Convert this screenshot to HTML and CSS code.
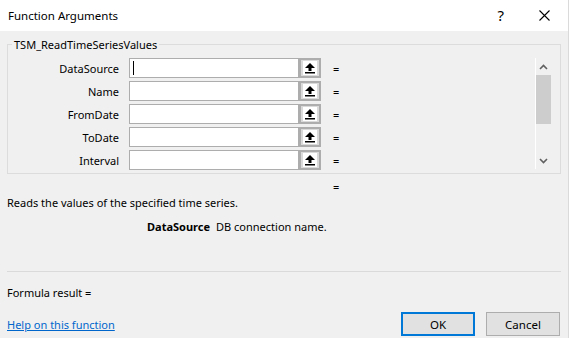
FILE: index.html
```html
<!DOCTYPE html>
<html lang="en">
<head>
    <meta charset="UTF-8" />
    <title>Function Arguments</title>
    <meta name="viewport" content="width=device-width, initial-scale=1.0" />
    <link rel="stylesheet" href="styles.css">
</head>

<body>
<div class="dialog">

    <!-- Title bar -->
    <div class="titlebar">
        <span class="title">Function Arguments</span>
        <span class="help-btn">?</span>
        <span class="close-btn">
            <svg width="11" height="11" viewBox="0 0 11 11"><path d="M0.5 0.5 L10.5 10.5 M10.5 0.5 L0.5 10.5" stroke="#000" stroke-width="1.1" fill="none"/></svg>
        </span>
    </div>

    <div class="body">

        <!-- Arguments group -->
        <fieldset class="group">
            <legend>TSM_ReadTimeSeriesValues</legend>
            <div class="group-inner">
                <div class="args">
                    <div class="arg-row">
                        <label>DataSource</label>
                        <div class="ref-box">
                            <span class="ref-text"><span class="caret"></span></span>
                            <span class="ref-btn"><svg width="18" height="16" viewBox="0 0 18 16"><rect x="2" y="1" width="14" height="14" fill="#fff"/><path d="M4 8 L9 3 L14 8 Z" fill="#000"/><rect x="7.5" y="7.5" width="3" height="3.5" fill="#000"/><rect x="4" y="12" width="10" height="1.5" fill="#000"/></svg></span>
                        </div>
                        <span class="eq">=</span>
                    </div>
                    <div class="arg-row">
                        <label>Name</label>
                        <div class="ref-box">
                            <span class="ref-text"></span>
                            <span class="ref-btn"><svg width="18" height="16" viewBox="0 0 18 16"><rect x="2" y="1" width="14" height="14" fill="#fff"/><path d="M4 8 L9 3 L14 8 Z" fill="#000"/><rect x="7.5" y="7.5" width="3" height="3.5" fill="#000"/><rect x="4" y="12" width="10" height="1.5" fill="#000"/></svg></span>
                        </div>
                        <span class="eq">=</span>
                    </div>
                    <div class="arg-row">
                        <label>FromDate</label>
                        <div class="ref-box">
                            <span class="ref-text"></span>
                            <span class="ref-btn"><svg width="18" height="16" viewBox="0 0 18 16"><rect x="2" y="1" width="14" height="14" fill="#fff"/><path d="M4 8 L9 3 L14 8 Z" fill="#000"/><rect x="7.5" y="7.5" width="3" height="3.5" fill="#000"/><rect x="4" y="12" width="10" height="1.5" fill="#000"/></svg></span>
                        </div>
                        <span class="eq">=</span>
                    </div>
                    <div class="arg-row">
                        <label>ToDate</label>
                        <div class="ref-box">
                            <span class="ref-text"></span>
                            <span class="ref-btn"><svg width="18" height="16" viewBox="0 0 18 16"><rect x="2" y="1" width="14" height="14" fill="#fff"/><path d="M4 8 L9 3 L14 8 Z" fill="#000"/><rect x="7.5" y="7.5" width="3" height="3.5" fill="#000"/><rect x="4" y="12" width="10" height="1.5" fill="#000"/></svg></span>
                        </div>
                        <span class="eq">=</span>
                    </div>
                    <div class="arg-row">
                        <label>Interval</label>
                        <div class="ref-box">
                            <span class="ref-text"></span>
                            <span class="ref-btn"><svg width="18" height="16" viewBox="0 0 18 16"><rect x="2" y="1" width="14" height="14" fill="#fff"/><path d="M4 8 L9 3 L14 8 Z" fill="#000"/><rect x="7.5" y="7.5" width="3" height="3.5" fill="#000"/><rect x="4" y="12" width="10" height="1.5" fill="#000"/></svg></span>
                        </div>
                        <span class="eq">=</span>
                    </div>
                </div>

                <!-- Scrollbar -->
                <div class="scrollbar">
                    <span class="sb-arrow">
                        <svg width="9" height="6" viewBox="0 0 9 6"><path d="M1 5 L4.5 1.5 L8 5" stroke="#606060" stroke-width="1.6" fill="none"/></svg>
                    </span>
                    <div class="sb-track"><div class="sb-thumb"></div></div>
                    <span class="sb-arrow">
                        <svg width="9" height="6" viewBox="0 0 9 6"><path d="M1 1 L4.5 4.5 L8 1" stroke="#606060" stroke-width="1.6" fill="none"/></svg>
                    </span>
                </div>
            </div>
        </fieldset>

        <div class="result-eq">=</div>
        <div class="description">Reads the values of the specified time series.</div>
        <div class="arg-help">
            <span class="arg-name">DataSource</span>
            <span class="arg-text">DB connection name.</span>
        </div>

        <div class="separator"></div>

        <div class="formula-result">Formula result =</div>

        <div class="footer">
            <a href="#" class="help-link">Help on this function</a>
            <div class="buttons">
                <button class="btn btn-default">OK</button>
                <button class="btn">Cancel</button>
            </div>
        </div>
    </div>
</div>
</body>
</html>
```

FILE: styles.css
```css
/* --- Page --- */
body {
    margin: 0;
    padding: 0;
    font-family: "Segoe UI", "Noto Sans", sans-serif;
    font-size: 11px;
    color: #000;
    background: #f0f0f0;
}

.dialog {
    width: 569px;
    height: 338px;
    box-sizing: border-box;
    background: #f0f0f0;
    border-right: 1px solid #dadada;
    overflow: hidden;
}

/* --- Title bar --- */
.titlebar {
    height: 31px;
    background: #fff;
    display: flex;
    align-items: center;
    padding-left: 8px;
}

.title {
    flex: 1;
    font-size: 11.5px;
}

.help-btn {
    font-size: 15px;
    margin-right: 35px;
    line-height: 1;
}

.close-btn {
    display: flex;
    margin-right: 18px;
}

/* --- Body --- */
.body {
    padding: 0 7px;
}

.group {
    margin: 6px 0 0 0;
    padding: 6px 9px 3px 0;
    border: 1px solid #dcdcdc;
    min-width: 0;
}

.group legend {
    margin-left: 4px;
    padding: 0 2px;
    line-height: 15px;
}

.group-inner {
    display: flex;
}

.args {
    flex: 1;
    display: flex;
    flex-direction: column;
    gap: 3px;
}

.arg-row {
    display: flex;
    align-items: center;
    height: 20px;
}

.arg-row label {
    width: 111px;
    margin-right: 10px;
    text-align: right;
}

.ref-box {
    display: flex;
    width: 192px;
    height: 20px;
}

.ref-text {
    flex: 1;
    box-sizing: border-box;
    border: 1px solid #adadad;
    background: #fff;
    display: flex;
    align-items: center;
    padding-left: 3px;
}

.caret {
    width: 1px;
    height: 14px;
    background: #000;
}

.ref-btn {
    width: 22px;
    box-sizing: border-box;
    border: 2px solid #adadad;
    background: #dadada;
    display: flex;
    align-items: center;
    justify-content: center;
}

.eq {
    margin-left: 12px;
}

/* --- Scrollbar --- */
.scrollbar {
    width: 15px;
    height: 111px;
    border-left: 1px solid #fff;
    display: flex;
    flex-direction: column;
}

.sb-arrow {
    height: 17px;
    display: flex;
    align-items: center;
    justify-content: center;
}

.sb-track {
    flex: 1;
}

.sb-thumb {
    height: 49px;
    background: #cdcdcd;
}

/* --- Description --- */
.result-eq {
    margin-top: 5px;
    padding-left: 326px;
    line-height: 15px;
}

.description {
    margin-top: 1px;
    line-height: 15px;
}

.arg-help {
    margin-top: 9px;
    padding-left: 140px;
    line-height: 15px;
    display: flex;
    gap: 6px;
}

.arg-name {
    font-weight: bold;
}

.separator {
    margin-top: 37px;
    border-top: 1px solid #dadada;
}

.formula-result {
    margin-top: 13px;
    line-height: 15px;
}

/* --- Footer --- */
.footer {
    margin-top: 12px;
    display: flex;
    align-items: center;
    justify-content: space-between;
}

.help-link {
    color: #0066cc;
    text-decoration: underline;
}

.buttons {
    display: flex;
    gap: 11px;
    margin-right: 1px;
}

.btn {
    width: 74px;
    height: 24px;
    box-sizing: border-box;
    border: 1px solid #adadad;
    background: #e1e1e1;
    font-family: inherit;
    font-size: 11.5px;
    color: #000;
    padding: 0;
}

.btn-default {
    border: 2px solid #0078d7;
}
```
